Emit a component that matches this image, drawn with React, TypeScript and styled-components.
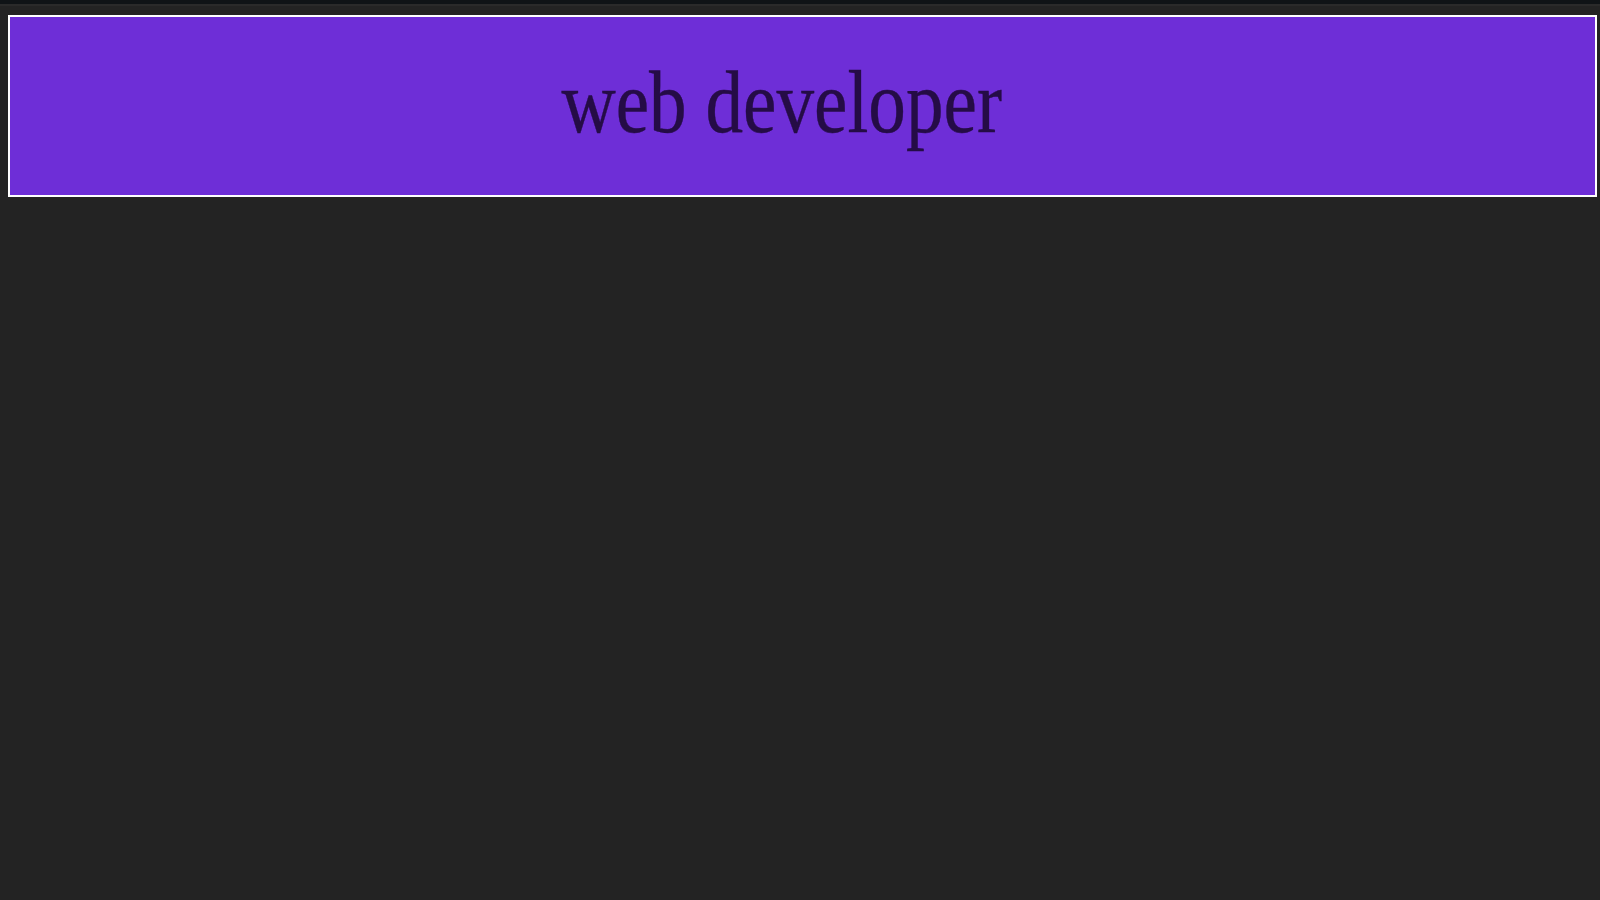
import React from "react";
import styled, { createGlobalStyle } from "styled-components";

const Global = createGlobalStyle`
  html, body {
    margin: 0;
    padding: 0;
    background: #232323;
  }
  #root {
    min-height: 100vh;
  }
`;

const Page = styled.div`
  min-height: 100vh;
  background: #232323;
  display: flex;
  flex-direction: column;
`;

const TopStrip = styled.div`
  height: 4px;
  background: #0f1316;
  border-bottom: 2px solid #2a2a2a;
`;

const Banner = styled.header`
  margin: 9px 3px 0 8px;
  height: 178px;
  border: 2px solid #ffffff;
  background: #6e2ed7;
  display: flex;
  justify-content: center;
  align-items: flex-start;
  padding-right: 41px;
`;

const Title = styled.h1`
  margin: 34px 0 0 0;
  font-family: "Liberation Serif", "Times New Roman", serif;
  font-weight: 400;
  font-size: 89px;
  line-height: normal;
  color: #250c46;
  display: inline-block;
  transform: scaleX(0.845);
  transform-origin: center top;
  white-space: nowrap;
  -webkit-text-stroke: 0.4px #250c46;
`;

export default function App() {
  return (
    <>
      <Global />
      <Page>
        <TopStrip />
        <Banner>
          <Title>web developer</Title>
        </Banner>
      </Page>
    </>
  );
}
